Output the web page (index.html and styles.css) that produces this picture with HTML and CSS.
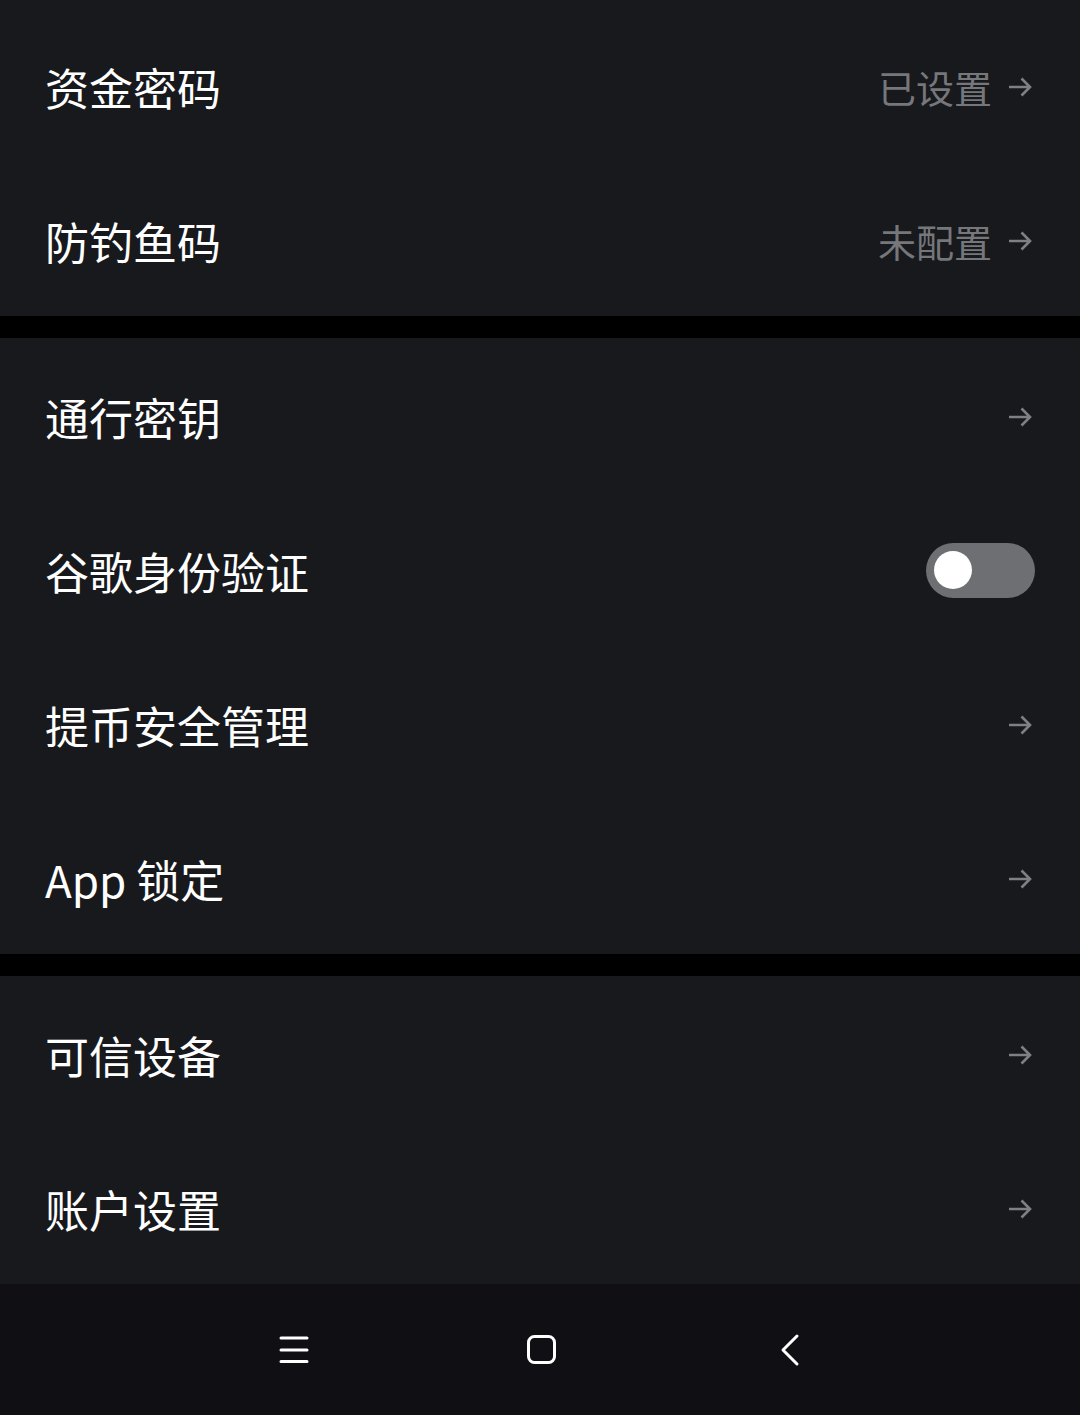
FILE: index.html
```html
<!DOCTYPE html>
<html lang="zh-CN">
<head>
    <meta charset="UTF-8">
    <meta name="viewport" content="width=device-width, initial-scale=1.0">
    <title>安全设置</title>
    <link rel="stylesheet" href="styles.css">
</head>
<body>
    <div class="page">
        <div class="group first">
            <div class="row">
                <span class="label">资金密码</span>
                <span class="right"><span class="value">已设置</span>
                    <svg class="arrow" width="24" height="22" viewBox="0 0 24 22"><path d="M1 11H22M13.5 2.5L22 11L13.5 19.5"/></svg></span>
            </div>
            <div class="row">
                <span class="label">防钓鱼码</span>
                <span class="right"><span class="value">未配置</span>
                    <svg class="arrow" width="24" height="22" viewBox="0 0 24 22"><path d="M1 11H22M13.5 2.5L22 11L13.5 19.5"/></svg></span>
            </div>
        </div>

        <div class="group">
            <div class="row">
                <span class="label">通行密钥</span>
                <span class="right"><svg class="arrow" width="24" height="22" viewBox="0 0 24 22"><path d="M1 11H22M13.5 2.5L22 11L13.5 19.5"/></svg></span>
            </div>
            <div class="row">
                <span class="label">谷歌身份验证</span>
                <span class="switch"><span class="knob"></span></span>
            </div>
            <div class="row">
                <span class="label">提币安全管理</span>
                <span class="right"><svg class="arrow" width="24" height="22" viewBox="0 0 24 22"><path d="M1 11H22M13.5 2.5L22 11L13.5 19.5"/></svg></span>
            </div>
            <div class="row">
                <span class="label">App 锁定</span>
                <span class="right"><svg class="arrow" width="24" height="22" viewBox="0 0 24 22"><path d="M1 11H22M13.5 2.5L22 11L13.5 19.5"/></svg></span>
            </div>
        </div>

        <div class="group">
            <div class="row">
                <span class="label">可信设备</span>
                <span class="right"><svg class="arrow" width="24" height="22" viewBox="0 0 24 22"><path d="M1 11H22M13.5 2.5L22 11L13.5 19.5"/></svg></span>
            </div>
            <div class="row">
                <span class="label">账户设置</span>
                <span class="right"><svg class="arrow" width="24" height="22" viewBox="0 0 24 22"><path d="M1 11H22M13.5 2.5L22 11L13.5 19.5"/></svg></span>
            </div>
        </div>
    </div>

    <div class="navbar">
        <svg class="nav-icon" width="40" height="40" viewBox="0 0 40 40"><path d="M7 8H33M7 20H33M7 31.5H33"/></svg>
        <svg class="nav-icon" width="40" height="40" viewBox="0 0 40 40"><rect x="6.5" y="6.5" width="26" height="26" rx="6"/></svg>
        <svg class="nav-icon" width="40" height="40" viewBox="0 0 40 40"><path d="M27 6L13 20L27 34"/></svg>
    </div>
</body>
</html>
```

FILE: styles.css
```css
body {
    margin: 0;
    background-color: #000;
    font-family: "Noto Sans CJK SC", "Noto Sans", sans-serif;
}
.page {
    display: flex;
    flex-direction: column;
    gap: 22px;
}
.group {
    background-color: #18191d;
}
.group.first {
    padding-top: 8px;
}
.row {
    height: 154px;
    display: flex;
    align-items: center;
    justify-content: space-between;
    padding: 0 45px 0 45px;
}
.label {
    color: #ffffff;
    font-size: 44px;
    line-height: 1;
    padding-top: 4px;
}
.right {
    display: flex;
    align-items: center;
    gap: 16px;
    padding-top: 4px;
    padding-right: 3px;
}
.value {
    color: #76777b;
    font-size: 38px;
    line-height: 1;
}
.arrow {
    fill: none;
    stroke: #7f8084;
    stroke-width: 2.6;
}
.switch {
    width: 109px;
    height: 55px;
    border-radius: 28px;
    background-color: #6e6f73;
    display: flex;
    align-items: center;
    padding-left: 8px;
    box-sizing: border-box;
    margin-top: 2px;
}
.knob {
    width: 38px;
    height: 38px;
    border-radius: 50%;
    background-color: #ffffff;
}
.navbar {
    height: 131px;
    background-color: #101014;
    display: flex;
    align-items: center;
    justify-content: center;
    gap: 208px;
    padding-left: 3px;
}
.nav-icon {
    fill: none;
    stroke: #ffffff;
    stroke-width: 3;
    stroke-linecap: round;
    stroke-linejoin: round;
    margin-top: 0;
}
```
